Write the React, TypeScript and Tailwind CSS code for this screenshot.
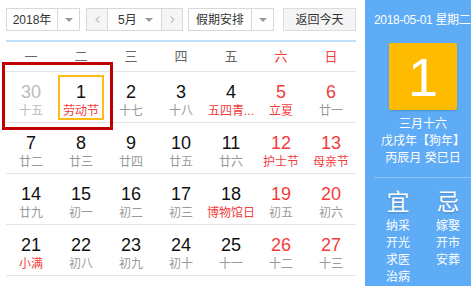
import { ChevronLeft, ChevronRight } from "lucide-react";

type Day = { n: number; sub: string; red?: boolean; subRed?: boolean; dim?: boolean; today?: boolean };

const rows: Day[][] = [
  [
    { n: 30, sub: "十五", dim: true },
    { n: 1, sub: "劳动节", subRed: true, today: true },
    { n: 2, sub: "十七" },
    { n: 3, sub: "十八" },
    { n: 4, sub: "五四青...", subRed: true },
    { n: 5, sub: "立夏", red: true, subRed: true },
    { n: 6, sub: "廿一", red: true },
  ],
  [
    { n: 7, sub: "廿二" },
    { n: 8, sub: "廿三" },
    { n: 9, sub: "廿四" },
    { n: 10, sub: "廿五" },
    { n: 11, sub: "廿六" },
    { n: 12, sub: "护士节", red: true, subRed: true },
    { n: 13, sub: "母亲节", red: true, subRed: true },
  ],
  [
    { n: 14, sub: "廿九" },
    { n: 15, sub: "初一" },
    { n: 16, sub: "初二" },
    { n: 17, sub: "初三" },
    { n: 18, sub: "博物馆日", subRed: true },
    { n: 19, sub: "初五", red: true },
    { n: 20, sub: "初六", red: true },
  ],
  [
    { n: 21, sub: "小满", subRed: true },
    { n: 22, sub: "初八" },
    { n: 23, sub: "初九" },
    { n: 24, sub: "初十" },
    { n: 25, sub: "十一" },
    { n: 26, sub: "十二", red: true },
    { n: 27, sub: "十三", red: true },
  ],
  [
    { n: 28, sub: "十四" },
    { n: 29, sub: "十五" },
    { n: 30, sub: "十六" },
    { n: 31, sub: "十七" },
    { n: 1, sub: "十八", dim: true },
    { n: 2, sub: "十九", dim: true },
    { n: 3, sub: "二十", dim: true },
  ],
];

const weekdays = ["一", "二", "三", "四", "五", "六", "日"];

function Caret() {
  return <span className="w-0 h-0 border-l-[4px] border-r-[4px] border-t-[4px] border-l-transparent border-r-transparent border-t-[#999]" />;
}

function DayCell({ d }: { d: Day }) {
  const numColor = d.dim ? "text-[#bbb]" : d.red ? "text-[#f23c3c]" : "text-[#111]";
  const subColor = d.dim ? "text-[#bbb]" : d.subRed ? "text-[#f23c3c]" : "text-[#999]";
  return (
    <div className="h-[50px] flex items-center justify-center">
      <div
        className={`w-[46px] h-[45px] flex flex-col items-center pt-[5px] border-2 ${
          d.today ? "border-[#fcbc14]" : "border-transparent"
        }`}
      >
        <span className={`text-[18px] leading-[20px] ${numColor}`}>{d.n}</span>
        <span className={`text-[12px] leading-[17px] mt-[1px] whitespace-nowrap ${subColor}`}>{d.sub}</span>
      </div>
    </div>
  );
}

export default function App() {
  return (
    <div
      className="w-[471px] h-[286px] overflow-hidden flex bg-white"
      style={{ fontFamily: '"Liberation Sans", "Noto Sans CJK SC", sans-serif' }}
    >
      {/* Calendar */}
      <div className="w-[365px] shrink-0 pl-[6px] pr-[9px] relative">
        {/* Toolbar */}
        <div className="flex items-center h-[23px] mt-[8px] text-[12px] text-[#333]">
          <div className="flex h-full border border-[#d8d8d8]">
            <span className="w-[50px] flex items-center justify-center">2018年</span>
            <span className="w-[22px] border-l border-[#d8d8d8] flex items-center justify-center">
              <Caret />
            </span>
          </div>
          <div className="flex h-full border border-[#d8d8d8] ml-[6px]">
            <span className="w-[21px] bg-[#f5f5f5] border-r border-[#d8d8d8] flex items-center justify-center text-[#666]">
              <ChevronLeft size={11} strokeWidth={1.5} />
            </span>
            <span className="w-[53px] flex items-center justify-between pl-[10px] pr-[8px]">
              5月
              <Caret />
            </span>
            <span className="w-[21px] bg-[#f5f5f5] border-l border-[#d8d8d8] flex items-center justify-center text-[#666]">
              <ChevronRight size={11} strokeWidth={1.5} />
            </span>
          </div>
          <div className="flex h-full border border-[#d8d8d8] ml-[5px]">
            <span className="w-[62px] flex items-center justify-center">假期安排</span>
            <span className="w-[22px] border-l border-[#d8d8d8] flex items-center justify-center">
              <Caret />
            </span>
          </div>
          <div className="h-full w-[73px] ml-[9px] border border-[#ddd] bg-[#f5f5f5] flex items-center justify-center">
            返回今天
          </div>
        </div>
        <div className="h-[2px] bg-[#bfe0f9] mt-[9px]" />

        {/* Weekday header */}
        <div className="grid grid-cols-7 h-[29px] items-center text-[13px]">
          {weekdays.map((w, i) => (
            <span key={w} className={`text-center ${i >= 5 ? "text-[#f23c3c]" : "text-[#666]"}`}>
              {w}
            </span>
          ))}
        </div>

        {/* Days */}
        {rows.map((r, i) => (
          <div key={i} className="grid grid-cols-7 border-t border-[#e4e4e4]">
            {r.map((d, j) => (
              <DayCell key={j} d={d} />
            ))}
          </div>
        ))}

        {/* Annotation box */}
        <div className="absolute left-[2px] top-[62px] w-[111px] h-[68px] border-[3px] border-[#c00000]" />
      </div>

      {/* Side panel */}
      <div className="w-[116px] shrink-0 bg-[#5eabf6] text-white flex flex-col items-center">
        <div className="shrink-0 text-[12px] leading-[14px] mt-[13px] self-start pl-[9px] whitespace-nowrap tracking-[-0.3px]">
          2018-05-01 星期二
        </div>
        <div className="shrink-0 w-[68px] h-[67px] mt-[16px] bg-[#ffbb00] rounded-[2px] shadow-[0_1px_2px_rgba(0,0,0,0.15)] flex items-center justify-center text-[54px] leading-none">
          1
        </div>
        <div className="shrink-0 text-[12px] leading-[17px] mt-[6px] text-center">
          <div>三月十六</div>
          <div>戊戌年【狗年】</div>
          <div>丙辰月 癸巳日</div>
        </div>
        <div className="shrink-0 self-stretch ml-[9px] h-px bg-[#8cc4f8] mt-[10px]" />
        <div className="shrink-0 grid grid-cols-2 w-[100px] mt-[11px] text-center">
          <div className="flex flex-col items-center">
            <span className="text-[23px] leading-[26px] [text-shadow:0_1px_2px_rgba(0,0,0,0.2)]">宜</span>
            <div className="text-[12px] leading-[17px] mt-[3px]">
              <div>纳采</div>
              <div>开光</div>
              <div>求医</div>
              <div>治病</div>
              <div>动土</div>
            </div>
          </div>
          <div className="flex flex-col items-center">
            <span className="text-[23px] leading-[26px] [text-shadow:0_1px_2px_rgba(0,0,0,0.2)]">忌</span>
            <div className="text-[12px] leading-[17px] mt-[3px]">
              <div>嫁娶</div>
              <div>开市</div>
              <div>安葬</div>
            </div>
          </div>
        </div>
      </div>
    </div>
  );
}
